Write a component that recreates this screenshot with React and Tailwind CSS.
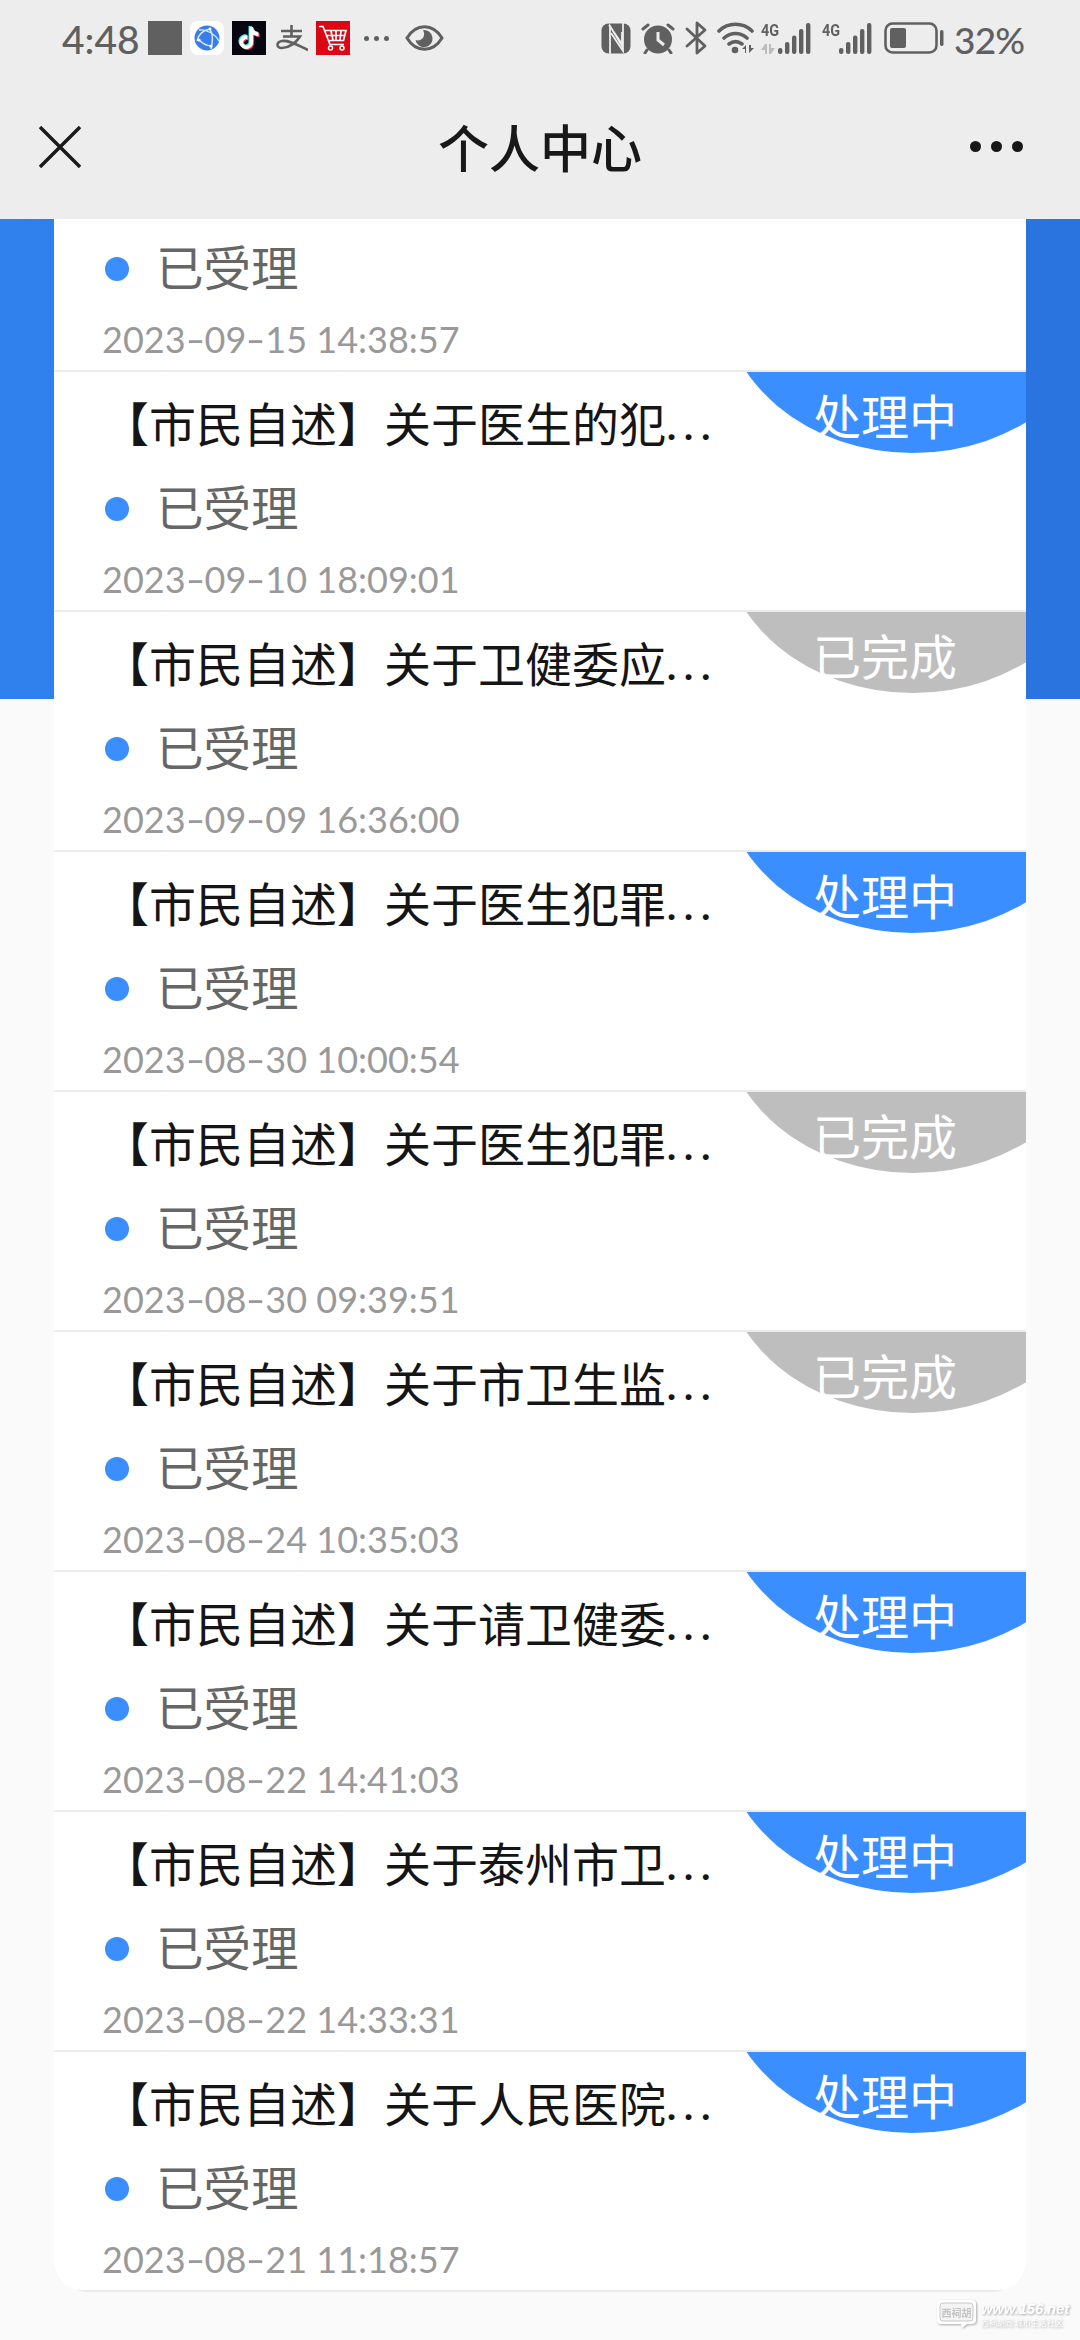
import { SiTiktok } from "react-icons/si";

const records = [
  { title: "【市民自述】关于医生的犯", time: "2023-09-10 18:09:01", done: false },
  { title: "【市民自述】关于卫健委应", time: "2023-09-09 16:36:00", done: true },
  { title: "【市民自述】关于医生犯罪", time: "2023-08-30 10:00:54", done: false },
  { title: "【市民自述】关于医生犯罪", time: "2023-08-30 09:39:51", done: true },
  { title: "【市民自述】关于市卫生监", time: "2023-08-24 10:35:03", done: true },
  { title: "【市民自述】关于请卫健委", time: "2023-08-22 14:41:03", done: false },
  { title: "【市民自述】关于泰州市卫", time: "2023-08-22 14:33:31", done: false },
  { title: "【市民自述】关于人民医院", time: "2023-08-21 11:18:57", done: false },
];

function Signal() {
  return (
    <svg className="w-[33px] h-[31px]" viewBox="0 0 33 31" fill="#606060">
      <rect x="0" y="25" width="4.4" height="6" rx="2" />
      <rect x="7" y="19" width="4.4" height="12" rx="2" />
      <rect x="14" y="12.5" width="4.4" height="18.5" rx="2" />
      <rect x="21" y="6" width="4.4" height="25" rx="2" />
      <rect x="28" y="0" width="4.4" height="31" rx="2" />
    </svg>
  );
}

function StatusBar() {
  return (
    <div className="h-[76px] flex items-center text-[#606060]">
      <span className="ml-[62px] w-[86px] pt-[2px] text-[39px] leading-none font-medium font-['Lato']">4:48</span>
      <div className="w-[34px] h-[34px] bg-[#606060]" />
      <svg className="ml-2 w-[34px] h-[34px]" viewBox="0 0 34 34">
        <rect width="34" height="34" rx="8" fill="#fff" />
        <circle cx="17" cy="17" r="12.5" fill="#3a7de8" />
        <path
          d="M20 8C13 9 8 14 7 20M9 19c4 4 8 6 13 6M9 9c8-1 16 4 20 11M20 8c3 5 3 12 1 20"
          fill="none"
          stroke="#d8ecff"
          strokeWidth="1.4"
        />
        <circle cx="9" cy="19" r="1.6" fill="#fff" />
        <circle cx="21" cy="25" r="1.6" fill="#fff" />
        <circle cx="20" cy="8" r="1.4" fill="#fff" />
      </svg>
      <div className="ml-2 w-[34px] h-[34px] bg-[#05060f] flex items-center justify-center">
        <SiTiktok
          size={22}
          color="#fff"
          className="[filter:drop-shadow(-1px_-1px_0_#3fe0e0)_drop-shadow(1px_1px_0_#ee2a55)]"
        />
      </div>
      <svg className="ml-[10px] w-8 h-[34px]" viewBox="0 0 32 34" fill="none" stroke="#606060" strokeWidth="2.6">
        <path d="M5 10h21M15.5 4v11M7 15.5h17C20 22 13 27 6 27c-6 0-6-6 0-7 7-1 15 4 26 9" />
      </svg>
      <svg className="ml-2 w-[34px] h-[34px]" viewBox="0 0 34 34">
        <rect width="34" height="34" fill="#dc0714" />
        <path
          d="M3 5.5h4l7 18h14M9 9.5h21l-2.5 10H13M11 14.5h18M15 10l2 9M20 10v9M25 10l-1 9"
          fill="none"
          stroke="#fff"
          strokeWidth="1.7"
        />
        <circle cx="14.5" cy="27" r="2" fill="#dc0714" stroke="#fff" strokeWidth="1.5" />
        <circle cx="26" cy="27" r="2" fill="#dc0714" stroke="#fff" strokeWidth="1.5" />
      </svg>
      <div className="ml-[14px] flex gap-[5px]">
        <i className="w-[5px] h-[5px] rounded-full bg-[#606060]" />
        <i className="w-[5px] h-[5px] rounded-full bg-[#606060]" />
        <i className="w-[5px] h-[5px] rounded-full bg-[#606060]" />
      </div>
      <svg className="ml-4 w-[39px] h-[26px]" viewBox="0 0 39 26">
        <path d="M2 13C11-2 28-2 37 13 28 28 11 28 2 13z" fill="none" stroke="#606060" strokeWidth="3" />
        <path d="M18 5a8.6 8.6 0 1 1-7.500 10c6 2 11-4 7.500-10z" fill="#606060" />
      </svg>

      <div className="ml-auto mr-[58px] flex items-center">
        <svg className="w-[31px] h-[31px]" viewBox="0 0 31 31">
          <rect x="0.5" y="0.5" width="29" height="30" rx="7" fill="#606060" />
          <path d="M9 31V3l12 20V9M8 2l13 19M10 10l12 18V0" fill="none" stroke="#ededed" strokeWidth="1.8" />
        </svg>
        <svg className="ml-[9px] w-[34px] h-[31px]" viewBox="0 0 34 31">
          <circle cx="17" cy="16.5" r="14" fill="#606060" />
          <path d="M2 6l5-4M32 6l-5-4M6 27l-2 3M28 27l2 3" stroke="#606060" strokeWidth="3" strokeLinecap="round" />
          <path d="M17 9v8l6 5" fill="none" stroke="#ededed" strokeWidth="3" />
        </svg>
        <svg className="ml-[10px] w-[22px] h-[34px]" viewBox="0 0 22 34">
          <path d="M2 8l18 17-8 7V2l8 7L2 25" fill="none" stroke="#606060" strokeWidth="2.8" strokeLinejoin="round" strokeLinecap="round" />
        </svg>
        <svg className="ml-[10px] w-[38px] h-[32px]" viewBox="0 0 38 32">
          <path d="M2 9c9-9 24-9 33 0M7 16c7-6 16-6 23 0M12 22c4-3 9-3 13 0" fill="none" stroke="#606060" strokeWidth="3.6" strokeLinecap="round" />
          <circle cx="18" cy="28" r="3.3" fill="#606060" />
          <path d="M25 27l4-4v8h-1v-4zM32 23v8l5-5h-3v-3z" fill="#606060" />
        </svg>
        <div className="ml-[6px] h-[31px] w-[17px] flex flex-col justify-between">
          <span className="text-[16px] leading-[15px] font-bold font-['Roboto'] origin-left scale-x-90">4G</span>
          <svg className="w-[14px] h-[10px]" viewBox="0 0 14 10" fill="#bcbcbc">
            <path d="M0 6l4-6h2v10H4V6zM8 0h2v4h4l-4 6H8z" />
          </svg>
        </div>
        <Signal />
        <span className="ml-[11px] w-[17px] h-[31px] text-[16px] leading-[15px] font-bold font-['Roboto'] origin-left scale-x-90">
          4G
        </span>
        <Signal />
        <svg className="ml-3 w-[60px] h-8" viewBox="0 0 60 32">
          <rect x="1.5" y="1.5" width="51" height="29" rx="7" fill="none" stroke="#606060" strokeWidth="2.6" />
          <rect x="6" y="6" width="16" height="20" rx="2" fill="#606060" />
          <rect x="56" y="8" width="3.5" height="16" rx="1.7" fill="#606060" />
        </svg>
        <span className="ml-[10px] pt-[3px] w-[68px] text-[37px] leading-none font-medium font-['Lato'] tracking-[-0.8px] whitespace-nowrap">
          32%
        </span>
      </div>
    </div>
  );
}

function NavBar() {
  return (
    <div className="h-[143px] pl-[39px] pr-[57px] flex items-center">
      <div className="flex-1">
        <svg className="-mt-[2px] w-[42px] h-[42px]" viewBox="0 0 42 42" stroke="#1a1a1a" strokeWidth="3.4">
          <path d="M1 1l40 40M41 1L1 41" />
        </svg>
      </div>
      <h1 className="ml-[18px] -mt-[2px] text-[51px] leading-none font-medium text-[#181818]">个人中心</h1>
      <div className="flex-1 -mt-[2px] flex justify-end gap-[10px]">
        <i className="w-[11px] h-[11px] rounded-full bg-[#181818]" />
        <i className="w-[11px] h-[11px] rounded-full bg-[#181818]" />
        <i className="w-[11px] h-[11px] rounded-full bg-[#181818]" />
      </div>
    </div>
  );
}

function Badge({ done }) {
  return (
    <div className="absolute top-0 right-0 w-[280px] h-[84px] overflow-hidden">
      <div
        className={`absolute left-[-24px] bottom-[3px] w-[382px] h-[318px] rounded-[50%] ${
          done ? "bg-[#bebebe]" : "bg-[#3b8eff]"
        }`}
      />
      <span className="absolute left-[67px] top-[18px] text-[48px] leading-[48px] text-white">
        {done ? "已完成" : "处理中"}
      </span>
    </div>
  );
}

function Progress({ time }) {
  const [date, clock] = time.split(" ");
  return (
    <>
      <div className="h-12 flex items-center">
        <i className="ml-[3px] w-6 h-6 rounded-full bg-[#3b8eff]" />
        <span className="ml-[27px] -mt-[7px] text-[47.5px] leading-[48px] text-[#666]">已受理</span>
      </div>
      <div className="mt-7 h-9 text-[36px] leading-9 text-[#999] whitespace-pre font-['Lato']">
        {date.split("-").map((part, i) => (
          <span key={i}>
            {i > 0 && <span className="inline-block w-[19px] text-center scale-x-150">-</span>}
            {part}
          </span>
        ))}
        <span> {clock}</span>
      </div>
    </>
  );
}

function Record({ item }) {
  return (
    <div className="relative h-60 pl-12 pt-[26px] border-b-2 border-[#ebebeb]">
      <div className="h-12 flex text-[47px] leading-[48px] text-[#151515] whitespace-nowrap">
        {item.title}
        <span className="font-['Lato'] tracking-[6px]">...</span>
      </div>
      <div className="mt-[39px]">
        <Progress time={item.time} />
      </div>
      <Badge done={item.done} />
    </div>
  );
}

function Watermark() {
  return (
    <div className="absolute right-[11px] bottom-[10px] flex items-center text-white [filter:drop-shadow(1px_1px_1px_#aaa)]">
      <svg className="w-[42px] h-[32px]" viewBox="0 0 42 32">
        <path d="M5 2h31q4 0 4 4v16q0 4-4 4h-5l-5 4-1-4H5q-4 0-4-4V6q0-4 4-4z" fill="#fff" />
        <rect x="4" y="5" width="33" height="18" rx="3" fill="#f4f4f4" stroke="#c8c8c8" />
        <text x="5.5" y="18.5" fontSize="10" fill="#c4c4c4" fontFamily="Noto Sans CJK SC" fontWeight="bold">
          西祠胡
        </text>
      </svg>
      <div className="ml-[3px] flex flex-col">
        <span className="text-[15px] leading-4 font-bold italic font-['Liberation_Sans'] tracking-[-0.2px]">www.156.net</span>
        <span className="text-[8px] leading-[11px] whitespace-nowrap">西祠胡同 城市生活社区</span>
      </div>
    </div>
  );
}

export default function App() {
  return (
    <div className="relative w-[1080px] h-[2340px] overflow-hidden bg-[#fafafa] font-['Noto_Sans_CJK_SC',sans-serif]">
      <header className="h-[219px] bg-[#ededed]">
        <StatusBar />
        <NavBar />
      </header>
      <div className="h-[480px] px-[54px] bg-gradient-to-r from-[#2f81ed] to-[#2a74e0]">
        <div className="h-[2073px] bg-white rounded-b-[32px] overflow-hidden">
          <div className="h-[153px] pl-12 pt-[26px] border-b-2 border-[#ebebeb]">
            <Progress time="2023-09-15 14:38:57" />
          </div>
          {records.map((item) => (
            <Record key={item.time} item={item} />
          ))}
        </div>
      </div>
      <Watermark />
    </div>
  );
}
